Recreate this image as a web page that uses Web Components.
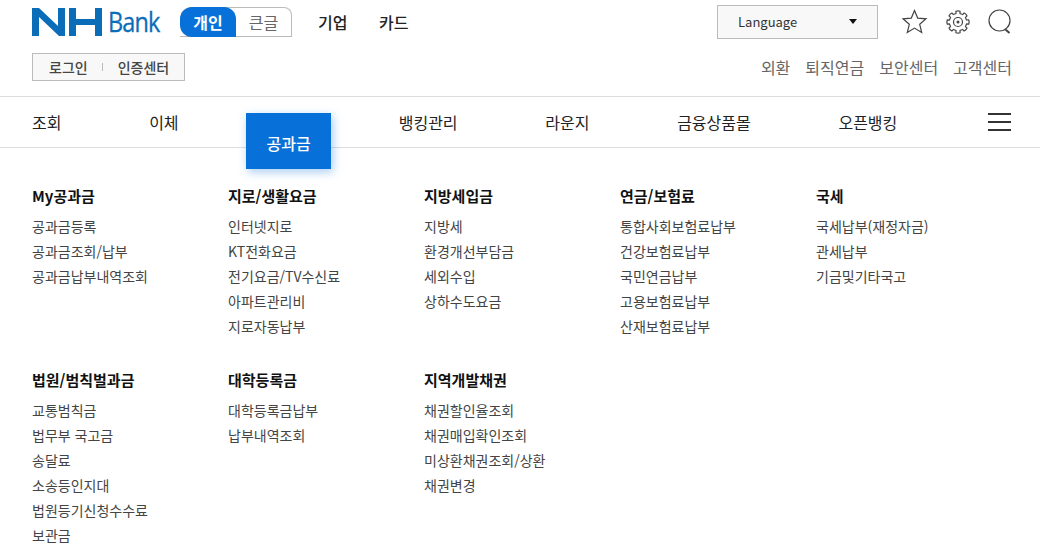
<!DOCTYPE html>
<html lang="ko">
<head>
<meta charset="utf-8">
<title>NH Bank</title>
<style>
  html, body { margin: 0; padding: 0; background: #fff; overflow: hidden; }
  body { font-family: "Noto Sans CJK KR", "Noto Sans", sans-serif; color: #222; }
</style>
</head>
<body>
<nh-header></nh-header>
<nh-nav></nh-nav>
<nh-menu>
  <nh-group title="My공과금" items="공과금등록|공과금조회/납부|공과금납부내역조회"></nh-group>
  <nh-group title="지로/생활요금" items="인터넷지로|KT전화요금|전기요금/TV수신료|아파트관리비|지로자동납부"></nh-group>
  <nh-group title="지방세입금" items="지방세|환경개선부담금|세외수입|상하수도요금"></nh-group>
  <nh-group title="연금/보험료" items="통합사회보험료납부|건강보험료납부|국민연금납부|고용보험료납부|산재보험료납부"></nh-group>
  <nh-group title="국세" items="국세납부(재정자금)|관세납부|기금및기타국고"></nh-group>
  <nh-group title="법원/범칙벌과금" items="교통범칙금|법무부 국고금|송달료|소송등인지대|법원등기신청수수료|보관금"></nh-group>
  <nh-group title="대학등록금" items="대학등록금납부|납부내역조회"></nh-group>
  <nh-group title="지역개발채권" items="채권할인율조회|채권매입확인조회|미상환채권조회/상환|채권변경"></nh-group>
</nh-menu>
<script>
// 8 rounded teeth round the centre of a 24 box
function gearPath() {
  const pt = (r, deg) => {
    const a = (deg * Math.PI) / 180;
    return `${(12 + r * Math.cos(a)).toFixed(2)} ${(12 + r * Math.sin(a)).toFixed(2)}`;
  };
  let d = "M" + pt(8.8, -13);
  for (let i = 0; i < 8; i++) {
    const c = i * 45;
    d += ` L${pt(10.9, c - 11)} Q${pt(11.5, c)} ${pt(10.9, c + 11)} L${pt(8.8, c + 13)}`;
    d += ` Q${pt(8.6, c + 22.5)} ${pt(8.8, c + 32)}`;
  }
  return d + "Z";
}

class NhHeader extends HTMLElement {
  constructor() {
    super();
    this.attachShadow({ mode: "open" });
  }

  connectedCallback() {
    this.shadowRoot.innerHTML = `
      <style>
        :host { display: block; height: 96px; padding: 0 28px 0 32px; box-sizing: border-box; }
        .top { display: flex; align-items: center; height: 43px; }
        .logo { display: flex; align-items: center; width: 148px; height: 28px; margin-top: 1px; }
        .bank { font: 27px/28px "Open Sans", sans-serif; color: #0b6db8; letter-spacing: -1px; margin-left: 5px; transform: scaleX(.87); transform-origin: left center; -webkit-text-stroke: .3px #0b6db8; }
        .toggle { display: flex; width: 112px; height: 30px; box-sizing: border-box; border: 1px solid #bbb; border-left: 0; border-radius: 12px 8px 0 0; font-size: 16px; }
        .toggle span { display: flex; align-items: center; justify-content: center; }
        .on { width: 56px; margin: -1px 0; background: #0870d9; color: #fff; font-weight: 700; border-radius: 12px 12px 0 12px; }
        .off { flex: 1; color: #666; }
        .biz { display: flex; gap: 31.5px; margin-left: 26px; font-size: 16px; font-weight: 500; color: #222; }
        .right { display: flex; align-items: center; margin-left: auto; }
        .lang { display: flex; align-items: center; justify-content: space-between; width: 161px; height: 34px; box-sizing: border-box; padding: 0 20px; background: #f8f8f8; border: 1px solid #bbb; font-size: 13px; line-height: 18px; color: #333; margin-right: 24px; }
        .caret { width: 0; height: 0; border: 4px solid transparent; border-top: 5px solid #111; border-bottom: 0; }
        .icons { display: flex; align-items: center; gap: 18px; }
        svg { display: block; }
        .bottom { display: flex; align-items: center; justify-content: space-between; margin-top: 10px; }
        .login { display: flex; align-items: center; width: 153px; height: 28px; box-sizing: border-box; background: #f8f8f8; border: 1px solid #bbb; font-size: 14px; font-weight: 500; color: #444; padding-left: 16px; }
        .login i { width: 1px; height: 8px; background: #bbb; margin: 0 14.500px; }
        .links { display: flex; gap: 15px; font-size: 16px; color: #666; }
      </style>
      <div class="top">
        <div class="logo">
          <svg width="71" height="28" viewBox="0 0 71 28">
            <polygon fill="#0b6db8" points="0,0 7,0 26,18 26,0 33,0 33,28 27,28 7,9 7,28 0,28"/>
            <polygon fill="#0b6db8" points="37,0 44,0 44,11 63,11 63,0 70,0 70,28 63,28 63,17 44,17 44,28 37,28"/>
          </svg>
          <span class="bank">Bank</span>
        </div>
        <div class="toggle"><span class="on">개인</span><span class="off">큰글</span></div>
        <div class="biz"><span>기업</span><span>카드</span></div>
        <div class="right">
          <div class="lang"><span>Language</span><span class="caret"></span></div>
          <div class="icons">
            <svg width="26" height="26" viewBox="0 0 26 26" fill="none" stroke="#444" stroke-width="1.2"><polygon points="12.5,1.500 15.7,9.100 24,9.800 17.700,15.300 19.700,23.500 12.500,19.100 5.300,23.500 7.300,15.300 1,9.800 9.300,9.100"/></svg>
            <svg width="24" height="24" viewBox="0 0 24 24" fill="none" stroke="#444" stroke-width="1.2"><path d="${gearPath()}"/><circle cx="12" cy="12" r="4.500"/><circle cx="12" cy="12" r="1.500" fill="#444" stroke="none"/></svg>
            <svg width="24" height="26" viewBox="0 0 24 26" fill="none" stroke="#444" stroke-width="1.2"><circle cx="11.500" cy="11.500" r="10.500"/><path d="M17.500 20.500l4 3.500" stroke-width="2"/></svg>
          </div>
        </div>
      </div>
      <div class="bottom">
        <div class="login"><span>로그인</span><i></i><span>인증센터</span></div>
        <div class="links"><span>외환</span><span>퇴직연금</span><span>보안센터</span><span>고객센터</span></div>
      </div>
    `;
  }
}

class NhNav extends HTMLElement {
  constructor() {
    super();
    this.attachShadow({ mode: "open" });
  }

  connectedCallback() {
    this.shadowRoot.innerHTML = `
      <style>
        :host { display: flex; align-items: center; height: 52px; box-sizing: border-box; padding: 0 29px 0 32px; border-top: 1px solid #ddd; border-bottom: 1px solid #ddd; font-size: 16px; color: #222; }
        .item { margin-right: 87.700px; white-space: nowrap; }
        .tab { display: flex; align-items: center; justify-content: center; align-self: flex-start; width: 85px; height: 56px; margin: 16px 68.100px 0 -20.700px; padding: 3px 0 0 1px; box-sizing: border-box; background: #0870d9; color: #fff; font-weight: 500; box-shadow: 2px 3px 9px rgba(8,112,217,.35); position: relative; }
        .burger { display: flex; flex-direction: column; gap: 6px; width: 23px; margin-left: auto; }
        .burger i { display: block; height: 2px; background: #333; }
      </style>
      <span class="item">조회</span>
      <span class="item">이체</span>
      <span class="tab">공과금</span>
      <span class="item">뱅킹관리</span>
      <span class="item">라운지</span>
      <span class="item">금융상품몰</span>
      <span class="item">오픈뱅킹</span>
      <span class="burger"><i></i><i></i><i></i></span>
    `;
  }
}

class NhMenu extends HTMLElement {
  constructor() {
    super();
    this.attachShadow({ mode: "open" });
  }

  connectedCallback() {
    this.shadowRoot.innerHTML = `
      <style>
        :host { display: grid; grid-template-columns: repeat(5, 196px); grid-auto-rows: 184px; padding: 36px 0 0 32px; }
      </style>
      <slot></slot>
    `;
  }
}

class NhGroup extends HTMLElement {
  constructor() {
    super();
    this.attachShadow({ mode: "open" });
  }

  connectedCallback() {
    const items = this.getAttribute("items").split("|");
    this.shadowRoot.innerHTML = `
      <style>
        :host { display: block; }
        h3 { margin: 0 0 6px; font-size: 15px; line-height: 24px; font-weight: 700; color: #111; }
        ul { margin: 0; padding: 0; list-style: none; font-size: 14px; line-height: 25px; color: #444; }
      </style>
      <h3>${this.getAttribute("title")}</h3>
      <ul>${items.map((item) => `<li>${item}</li>`).join("")}</ul>
    `;
  }
}

customElements.define("nh-header", NhHeader);
customElements.define("nh-nav", NhNav);
customElements.define("nh-menu", NhMenu);
customElements.define("nh-group", NhGroup);
</script>
</body>
</html>
